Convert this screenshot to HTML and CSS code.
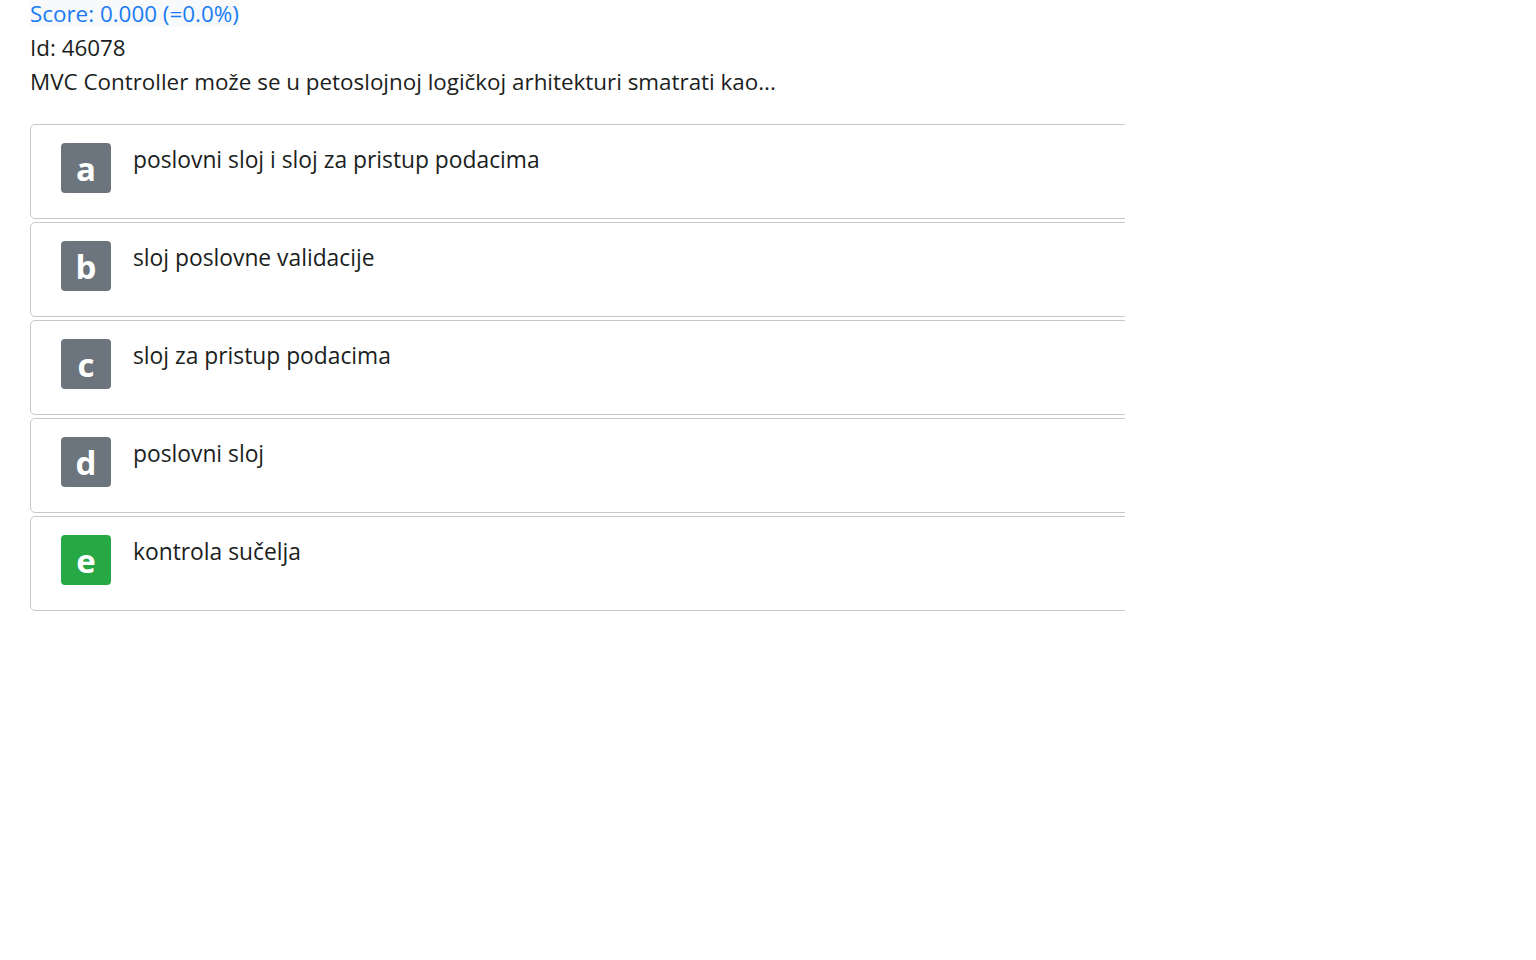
FILE: index.html
```html
<!DOCTYPE html>
<html>
<head>
<meta charset="utf-8">
<link rel="stylesheet" href="styles.css">
</head>
<body>
<div class="page">
  <div class="score">Score: 0.000 (=0.0%)</div>
  <div class="line">Id: 46078</div>
  <div class="line">MVC Controller može se u petoslojnoj logičkoj arhitekturi smatrati kao...</div>
  <div class="answers">
    <div class="card"><span class="badge">a</span><span class="txt">poslovni sloj i sloj za pristup podacima</span></div>
    <div class="card"><span class="badge">b</span><span class="txt">sloj poslovne validacije</span></div>
    <div class="card"><span class="badge">c</span><span class="txt">sloj za pristup podacima</span></div>
    <div class="card"><span class="badge">d</span><span class="txt">poslovni sloj</span></div>
    <div class="card"><span class="badge ok">e</span><span class="txt">kontrola sučelja</span></div>
  </div>
</div>
</body>
</html>
```

FILE: styles.css
```css
html, body { margin: 0; padding: 0; background: #fff; }
body {
  font-family: "Open Sans", "Noto Sans", sans-serif;
  font-size: 22.4px;
  color: #1b1e21;
}
.page { padding-left: 30px; }
.score {
  display: inline-block;
  color: #1a7cf5;
  background: #f8f9fa;
  line-height: 27px;
  height: 27px;
  margin-bottom: 4px;
  vertical-align: top;
}
.line { line-height: 34px; }
.answers {
  margin-top: 25px;
  width: 1095px;
  overflow: hidden;
  display: flex;
  flex-direction: column;
  gap: 3px;
}
.card {
  width: 1200px;
  height: 95px;
  border: 1px solid #c8c8c8;
  border-radius: 5px;
  display: flex;
  align-items: flex-start;
  padding: 18px 0 0 30px;
  box-sizing: border-box;
  flex: none;
}
.badge {
  width: 50px;
  height: 50px;
  border-radius: 4px;
  background: #6c757d;
  color: #fff;
  font-weight: 700;
  font-size: 33px;
  display: flex;
  align-items: center;
  justify-content: center;
  flex: none;
}
.badge.ok { background: #28a745; }
.txt { margin-left: 22px; line-height: 34px; font-size: 22.8px; }
```
